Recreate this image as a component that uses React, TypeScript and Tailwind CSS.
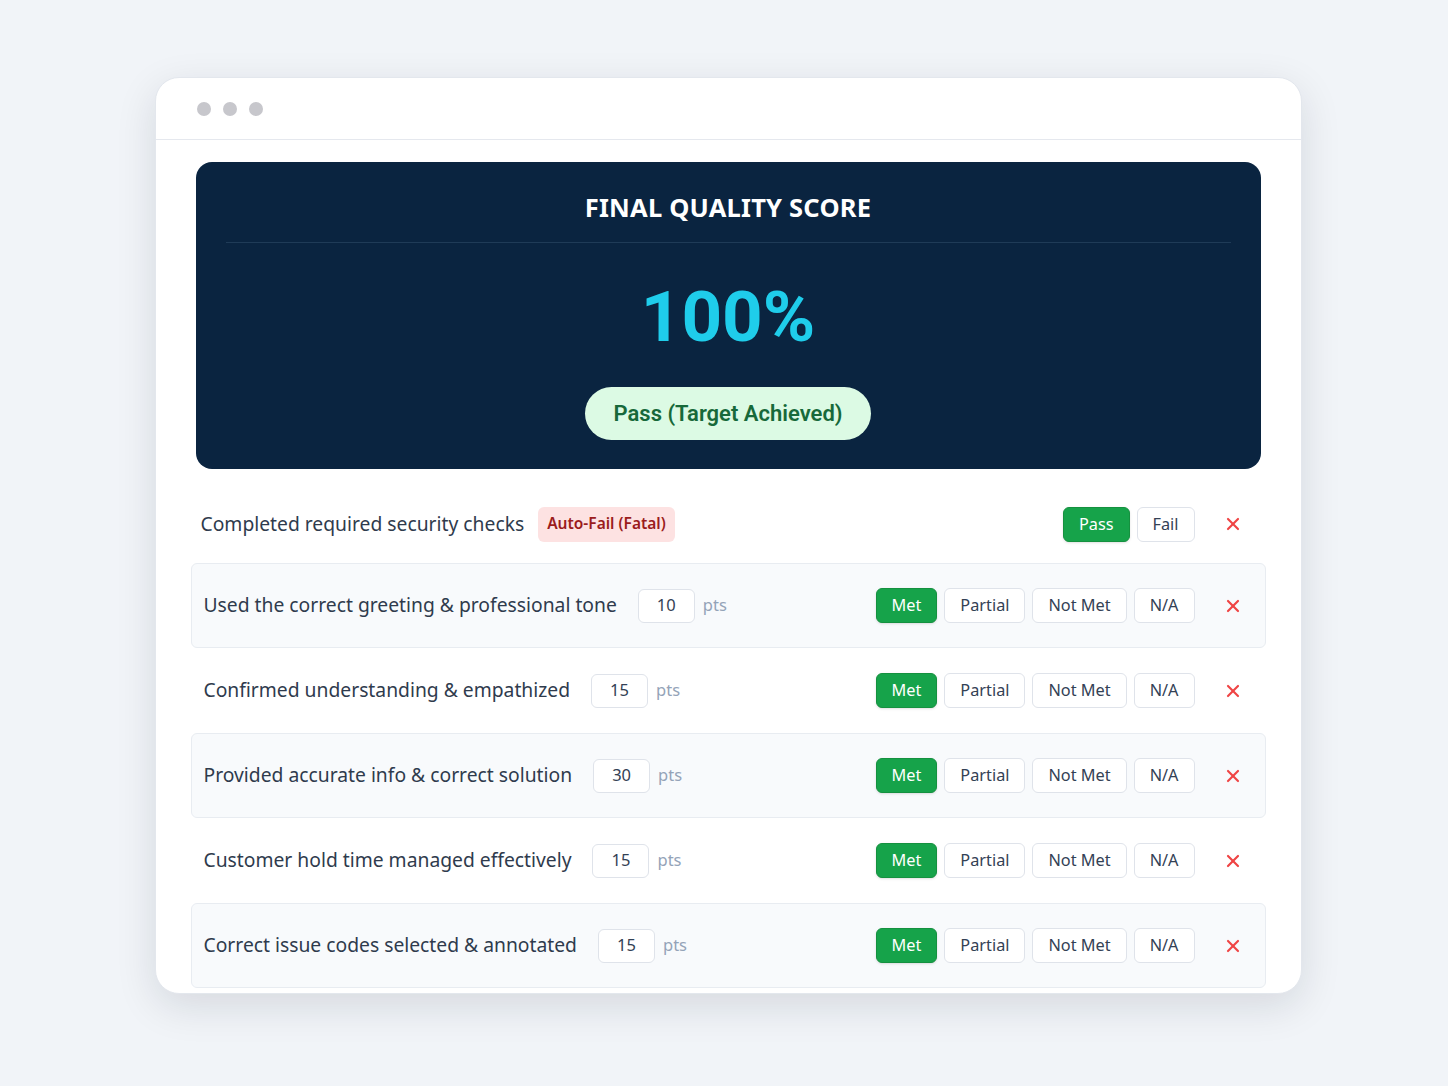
import { X } from "lucide-react";

type Criterion = {
  label: string;
  points: number;
};

const criteria: Criterion[] = [
  { label: "Used the correct greeting & professional tone", points: 10 },
  { label: "Confirmed understanding & empathized", points: 15 },
  { label: "Provided accurate info & correct solution", points: 30 },
  { label: "Customer hold time managed effectively", points: 15 },
  { label: "Correct issue codes selected & annotated", points: 15 },
];

const ratings = ["Met", "Partial", "Not Met", "N/A"];

const Choice = ({ label, active }: { label: string; active?: boolean }) => (
  <button
    className={`h-[35px] px-[15px] rounded-md text-[16.3px] leading-none border ${
      active
        ? "bg-[#16a34a] border-[#15913f] text-white shadow-sm"
        : "bg-white border-[#dfe3ea] text-[#334155]"
    }`}
  >
    {label}
  </button>
);

const RemoveButton = () => (
  <button className="w-[40px] ml-[18px] flex items-center justify-center text-[#ef4444]">
    <X size={20} strokeWidth={2.6} />
  </button>
);

const App = () => {
  return (
    <div
      className="min-h-screen w-full bg-[#f1f4f8] flex justify-center pt-[77px] pl-[8px]"
      style={{ fontFamily: '"Noto Sans", "Open Sans", sans-serif' }}
    >
      <div className="w-[1147px] h-[917px] bg-white rounded-[24px] border border-[#e3e7ed] shadow-[0_12px_40px_rgba(15,23,42,0.12)] overflow-hidden">
        {/* window chrome */}
        <div className="h-[62px] flex items-center gap-[12px] px-[41px] border-b border-[#e5e8ee]">
          <span className="w-[14px] h-[14px] rounded-full bg-[#c7c7cc]" />
          <span className="w-[14px] h-[14px] rounded-full bg-[#c7c7cc]" />
          <span className="w-[14px] h-[14px] rounded-full bg-[#c7c7cc]" />
        </div>

        <div className="px-[35px] pt-[22px]">
          {/* score panel */}
          <div className="mx-[5px] h-[307px] rounded-[16px] bg-[#0a2440] flex flex-col items-center px-[30px]">
            <h2 className="pt-[26px] pb-[16px] text-[25.5px] font-bold text-white tracking-[0.2px]">
              FINAL QUALITY SCORE
            </h2>
            <div className="w-full h-px bg-[#1f3b57]" />
            <div
              className="mt-[38px] text-[71px] font-bold leading-none text-[#1fcdeb]"
              style={{ fontFamily: '"Roboto", "Liberation Sans", sans-serif' }}
            >
              100%
            </div>
            <div
              className="mt-[35px] h-[53px] px-[29px] rounded-full bg-[#dcfae4] flex items-center text-[22px] font-semibold text-[#17693a]"
              style={{ fontFamily: '"Roboto", "Liberation Sans", sans-serif' }}
            >
              Pass (Target Achieved)
            </div>
          </div>

          {/* fatal criterion */}
          <div className="mt-[16px] h-[78px] flex items-center pl-[10px] pr-[13px]">
            <span className="text-[19.3px] text-[#2f3b4d]">
              Completed required security checks
            </span>
            <span className="ml-[14px] h-[35px] px-[9px] rounded-md bg-[#fde2e2] flex items-center text-[15.5px] font-semibold text-[#9b1c1c]">
              Auto-Fail (Fatal)
            </span>
            <div className="ml-auto flex gap-[7px]">
              <Choice label="Pass" active />
              <Choice label="Fail" />
            </div>
            <RemoveButton />
          </div>

          {/* weighted criteria */}
          {criteria.map((c, i) => (
            <div
              key={c.label}
              className={`h-[85px] flex items-center pl-[12px] pr-[12px] rounded-md ${
                i % 2 === 0
                  ? "bg-[#f8fafc] border border-[#e8ecf1]"
                  : "bg-white border border-transparent"
              }`}
            >
              <span className="text-[19.3px] text-[#2f3b4d]">{c.label}</span>
              <span className="ml-[21px] w-[57px] h-[34px] rounded-md border border-[#dfe3ea] bg-white flex items-center justify-center text-[16.5px] text-[#334155]">
                {c.points}
              </span>
              <span className="ml-[8px] text-[16.5px] text-[#94a3b8]">pts</span>
              <div className="ml-auto flex gap-[7px]">
                {ratings.map((r) => (
                  <Choice key={r} label={r} active={r === "Met"} />
                ))}
              </div>
              <RemoveButton />
            </div>
          ))}
        </div>
      </div>
    </div>
  );
};

export default App;
